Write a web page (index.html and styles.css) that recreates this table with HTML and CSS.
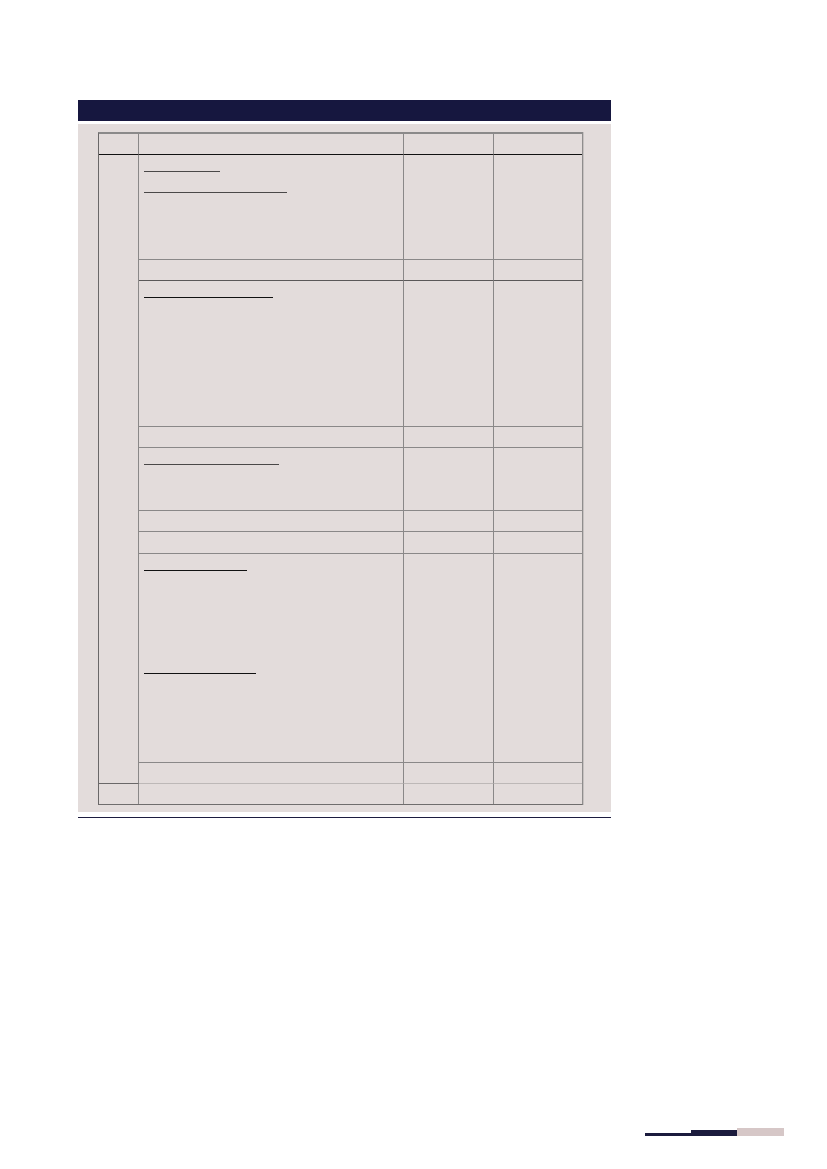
FILE: index.html
```html
<!DOCTYPE html>
<html lang="en">
<head>
<meta charset="utf-8">
<title>Table</title>
<link rel="stylesheet" href="styles.css">
</head>
<body>
<div class="page">
  <div class="bar"></div>
  <div class="panel">
    <div class="tbl">
      <div class="c h"></div><div class="c h"></div><div class="c h"></div><div class="c h last"></div>

      <div class="c first"></div>

      <div class="c r1"><div class="line"><span class="ul w76"></span></div><div class="line"><span class="ul w143"></span></div></div>
      <div class="c r1"></div><div class="c r1 last"></div>

      <div class="c r2 dark"></div><div class="c r2 dark"></div><div class="c r2 dark last"></div>

      <div class="c r3"><div class="line"><span class="ul w129 blk"></span></div></div>
      <div class="c r3"></div><div class="c r3 last"></div>

      <div class="c r4"></div><div class="c r4"></div><div class="c r4 last"></div>

      <div class="c r5"><div class="line"><span class="ul w135"></span></div></div>
      <div class="c r5"></div><div class="c r5 last"></div>

      <div class="c r6"></div><div class="c r6"></div><div class="c r6 last"></div>

      <div class="c r7"></div><div class="c r7"></div><div class="c r7 last"></div>

      <div class="c r8">
        <div class="line"><span class="ul w103 blk"></span></div>
        <div class="line"></div><div class="line"></div><div class="line"></div><div class="line"></div>
        <div class="line"><span class="ul w112 blk"></span></div>
      </div>
      <div class="c r8"></div><div class="c r8 last"></div>

      <div class="c r9 light"></div><div class="c r9 light"></div><div class="c r9 light last"></div>

      <div class="c r10"></div><div class="c r10"></div><div class="c r10"></div><div class="c r10 last"></div>
    </div>
  </div>
  <div class="rule"></div>
  <div class="footer">
    <span class="seg s1"></span><span class="seg s2"></span><span class="seg s3"></span>
  </div>
</div>
</body>
</html>
```

FILE: styles.css
```css
html, body {
  margin: 0;
  padding: 0;
  background: #ffffff;
  font-family: "Liberation Sans", Arial, sans-serif;
}

.page {
  padding-top: 100px;
  width: 827px;
}

.bar {
  margin-left: 78px;
  width: 533px;
  height: 21px;
  background: #16173f;
}

.panel {
  margin-left: 78px;
  margin-top: 3px;
  width: 533px;
  height: 688px;
  box-sizing: border-box;
  padding-top: 8px;
  padding-left: 20px;
  background: #e3dcdb;
}

.tbl {
  display: grid;
  grid-template-columns: 40px 265px 90px 88px;
  grid-template-rows: 21px 105px 21px 146px 21px 63px 21px 22px 209px 21px 20px;
  width: 485px;
  box-sizing: border-box;
  border-top: 2px solid #8b8a8a;
  border-left: 1px solid #6a6868;
  border-right: 1px solid #8f8d8d;
  border-bottom: 1px solid #6f6d6d;
  box-shadow: 1px 0 0 #c6c1c0;
}

.c {
  box-sizing: border-box;
  border-right: 1px solid #8a8888;
  border-bottom: 1px solid #8a8888;
}

.c.last {
  border-right: none;
}

.c.h {
  border-bottom: 1px solid #111111;
}

.c.first {
  grid-column: 1;
  grid-row: 2 / 11;
  border-bottom: 1px solid #6a6868;
}

.c.dark {
  border-bottom-color: #5a5858;
}

.c.light {
  border-bottom-color: #bdb8b7;
}

.c.r10 {
  border-bottom: none;
}

.line {
  height: 20.6px;
  box-sizing: border-box;
  padding-left: 5px;
  padding-bottom: 3.6px;
  display: flex;
  align-items: flex-end;
}

.ul {
  display: block;
  height: 1px;
  background: #4a4848;
}

.ul.blk {
  background: #111111;
}

.w76 { width: 76px; }
.w143 { width: 143px; }
.w129 { width: 129px; }
.w135 { width: 135px; }
.w103 { width: 103px; }
.w112 { width: 112px; }

.rule {
  margin-left: 78px;
  margin-top: 5px;
  width: 533px;
  height: 1px;
  background: #1c1c40;
}

.footer {
  margin-top: 310px;
  margin-left: 645px;
  display: flex;
  align-items: flex-end;
  height: 8px;
}

.seg {
  display: block;
}

.s1 {
  width: 46px;
  height: 3px;
  background: #1b1b3d;
}

.s2 {
  width: 46px;
  height: 6px;
  background: #1b1b3d;
}

.s3 {
  width: 47px;
  height: 8px;
  background: #d6c7c7;
}
```
